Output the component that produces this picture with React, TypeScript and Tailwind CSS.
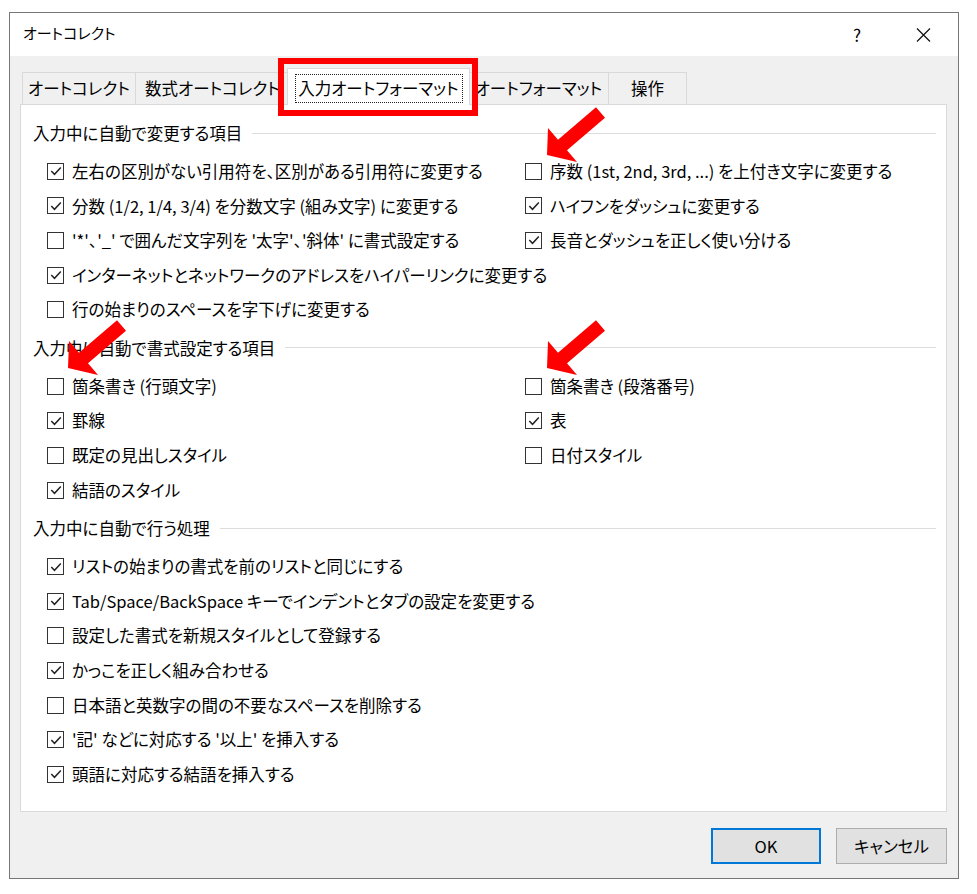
import React from "react";

type Item = [boolean, string];

const font = "font-['Noto_Sans_CJK_JP',sans-serif]";

function Box({ checked }: { checked: boolean }) {
	return (
		<span className="w-[17px] h-[17px] border-[1.5px] border-[#333] bg-white flex-none flex items-center justify-center">
			{checked && (
				<svg width="14" height="14" viewBox="0 0 14 14">
					<polyline points="2.3,7 5.5,10.3 11.8,3.5" fill="none" stroke="#222" strokeWidth="1.5" />
				</svg>
			)}
		</span>
	);
}

function Check({ item }: { item?: Item }) {
	if (!item) return null;
	return (
		<div className="flex items-center gap-[8px] whitespace-nowrap">
			<Box checked={item[0]} />
			<span>{item[1]}</span>
		</div>
	);
}

function Header({ title }: { title: string }) {
	return (
		<div className="h-[42px] flex items-center pl-[12px] pr-[10px]">
			<span className="whitespace-nowrap">{title}</span>
			<div className="flex-1 h-px bg-[#dcdcdc] ml-[10px]" />
		</div>
	);
}

function Rows({ left, right = [] }: { left: Item[]; right?: Item[] }) {
	return (
		<div className="pl-[26px]">
			{left.map((l, i) => (
				<div key={i} className="h-[34.6px] flex items-center">
					<div className="w-[478px]">
						<Check item={l} />
					</div>
					<div className="flex-1">
						<Check item={right[i]} />
					</div>
				</div>
			))}
		</div>
	);
}

function Arrow({ x, y }: { x: number; y: number }) {
	return (
		<svg className="absolute" style={{ left: x, top: y }} width="64" height="58" viewBox="0 0 64 58">
			<polygon points="3,49 4,22 14,33.7 52,1.2 61,11.8 23,44.3 33,56" fill="#ff0000" />
		</svg>
	);
}

const sec1Left: Item[] = [
	[true, "左右の区別がない引用符を、区別がある引用符に変更する"],
	[true, "分数 (1/2, 1/4, 3/4) を分数文字 (組み文字) に変更する"],
	[false, "'*'、'_' で囲んだ文字列を '太字'、'斜体' に書式設定する"],
	[true, "インターネットとネットワークのアドレスをハイパーリンクに変更する"],
	[false, "行の始まりのスペースを字下げに変更する"],
];
const sec1Right: Item[] = [
	[false, "序数 (1st, 2nd, 3rd, ...) を上付き文字に変更する"],
	[true, "ハイフンをダッシュに変更する"],
	[true, "長音とダッシュを正しく使い分ける"],
];
const sec2Left: Item[] = [
	[false, "箇条書き (行頭文字)"],
	[true, "罫線"],
	[false, "既定の見出しスタイル"],
	[true, "結語のスタイル"],
];
const sec2Right: Item[] = [
	[false, "箇条書き (段落番号)"],
	[true, "表"],
	[false, "日付スタイル"],
];
const sec3: Item[] = [
	[true, "リストの始まりの書式を前のリストと同じにする"],
	[true, "Tab/Space/BackSpace キーでインデントとタブの設定を変更する"],
	[false, "設定した書式を新規スタイルとして登録する"],
	[true, "かっこを正しく組み合わせる"],
	[false, "日本語と英数字の間の不要なスペースを削除する"],
	[true, "'記' などに対応する '以上' を挿入する"],
	[true, "頭語に対応する結語を挿入する"],
];

const tabs = [
	{ label: "オートコレクト", w: "w-[113px]" },
	{ label: "数式オートコレクト", w: "w-[154px]" },
	{ label: "入力オートフォーマット", w: "w-[179px]", active: true },
	{ label: "オートフォーマット", w: "w-[140px]" },
	{ label: "操作", w: "w-[79px]" },
];

export default function App() {
	return (
		<div className={`relative w-[977px] h-[894px] bg-white overflow-hidden text-black ${font} [font-feature-settings:'palt'] text-[16.5px]`}>
			<div className="h-[12px]" />

			<div className="ml-[9px] w-[950px] h-[867px] border border-[#777] flex flex-col">
				{/* title bar */}
				<div className="h-[43px] bg-white flex items-center">
					<span className="pl-[13px] text-[15px] -mt-[3px]">オートコレクト</span>
					<div className="ml-auto flex items-center">
						<span className="w-[46px] text-center text-[17px]">?</span>
						<div className="w-[20px]" />
						<div className="w-[46px] flex justify-center">
							<svg width="15" height="14" viewBox="0 0 15 14">
								<path d="M1 0.5 L14 13.5 M14 0.5 L1 13.5" stroke="#111" strokeWidth="1.2" fill="none" />
							</svg>
						</div>
						<div className="w-[12px]" />
					</div>
				</div>

				{/* body */}
				<div className="flex-1 bg-[#f0f0f0] pl-[10px] pr-[11px] flex flex-col">
					<div className="h-[48px] flex items-end pl-[2px]">
						{tabs.map((t, i) =>
							t.active ? (
								<div
									key={i}
									className="relative z-10 -mx-[2px] -mb-px w-[183px] h-[37px] bg-white border border-b-0 border-[#d9d9d9] flex justify-center pt-[5px]"
								>
									<div className="w-[168px] h-[29px] border border-dotted border-[#222] flex items-center justify-center whitespace-nowrap">
										{t.label}
									</div>
								</div>
							) : (
								<div
									key={i}
									className={`${t.w} h-[32px] border-t border-l ${i === tabs.length - 1 ? "border-r" : ""} border-[#d9d9d9] flex items-center justify-center whitespace-nowrap`}
								>
									{t.label}
								</div>
							)
						)}
					</div>

					<div className="h-[708px] bg-white border border-[#d9d9d9] pt-[7px]">
						<Header title="入力中に自動で変更する項目" />
						<Rows left={sec1Left} right={sec1Right} />
						<Header title="入力中に自動で書式設定する項目" />
						<Rows left={sec2Left} right={sec2Right} />
						<Header title="入力中に自動で行う処理" />
						<Rows left={sec3} />
					</div>

					<div className="flex justify-end gap-[15px] mt-[16px]">
						<button className="w-[110px] h-[36px] border-2 border-[#0078d7] bg-[#e1e1e1] flex items-center justify-center">
							OK
						</button>
						<button className="w-[111px] h-[36px] border border-[#adadad] bg-[#e1e1e1] flex items-center justify-center">
							キャンセル
						</button>
					</div>
				</div>
			</div>

			{/* annotations */}
			<div className="absolute left-[278px] top-[58px] w-[200px] h-[58px] border-[6px] border-[#ff0000]" />
			<Arrow x={544} y={106} />
			<Arrow x={65} y={319} />
			<Arrow x={544} y={319} />
		</div>
	);
}
